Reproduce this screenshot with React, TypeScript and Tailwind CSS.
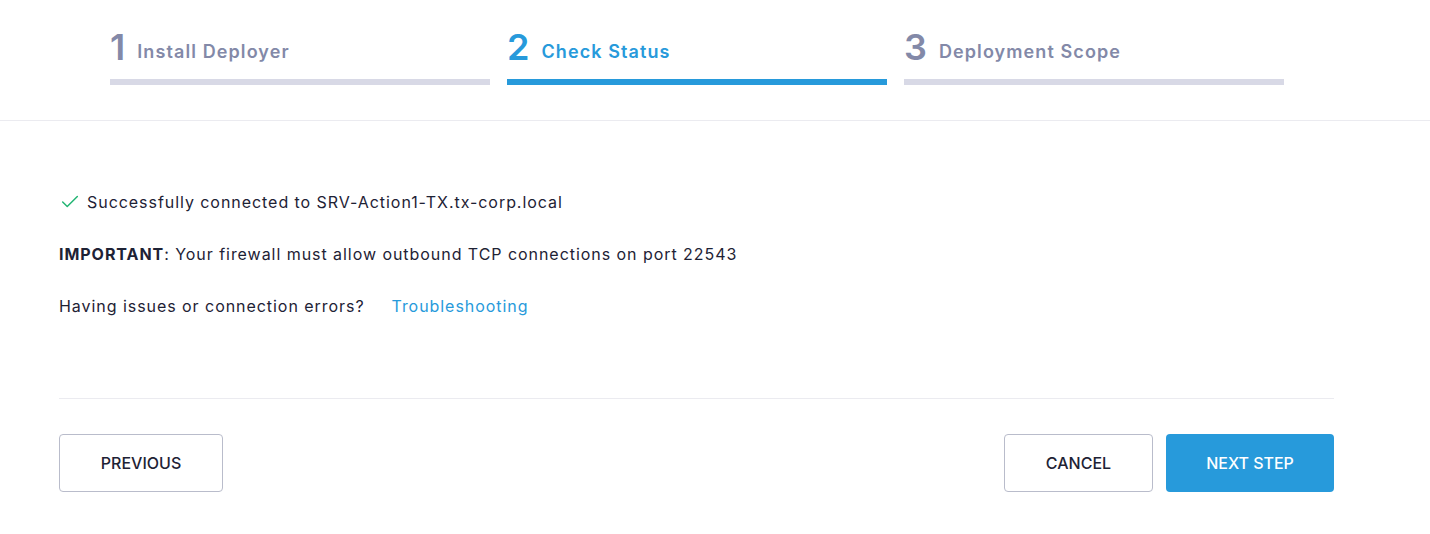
import { Check } from "lucide-react";

const steps = [
  { n: "1", title: "Install Deployer", active: false },
  { n: "2", title: "Check Status", active: true },
  { n: "3", title: "Deployment Scope", active: false },
];

export default function App() {
  return (
    <div className="min-h-[534px] bg-white text-[#1e2235]" style={{ fontFamily: "Inter, 'Noto Sans', sans-serif" }}>
      <div className="border-b border-[#ebebf0] pt-[22px] h-[121px]">
        <div className="ml-[110px] w-[1174px] grid grid-cols-3 gap-[17px]">
          {steps.map((s) => (
            <div key={s.n}>
              <div className={`flex items-baseline gap-[12px] h-[57px] ${s.active ? "text-[#279adb]" : "text-[#8389a8]"}`}>
                <span className="text-[36px] font-semibold leading-[50px]">{s.n}</span>
                <span className="text-[18px] font-semibold tracking-[1.1px] relative -top-[2px]">{s.title}</span>
              </div>
              <div className={`h-[6px] ${s.active ? "bg-[#279adb]" : "bg-[#d8d9e6]"}`} />
            </div>
          ))}
        </div>
      </div>

      <div className="mx-[59px] w-[1275px]">
        <div className="pt-[69px] pb-[80px] text-[16px] tracking-[0.95px] flex flex-col gap-[28px]">
          <div className="flex items-center gap-[6px] h-[24px]">
            <Check className="w-[22px] h-[22px] text-[#22b573]" strokeWidth={1.6} />
            <span>Successfully connected to SRV-Action1-TX.tx-corp.local</span>
          </div>
          <div className="h-[24px] flex items-center">
            <span><b className="font-bold">IMPORTANT</b>: Your firewall must allow outbound TCP connections on port 22543</span>
          </div>
          <div className="h-[24px] flex items-center gap-[27px]">
            <span>Having issues or connection errors?</span>
            <a className="text-[#279adb]" href="#">Troubleshooting</a>
          </div>
        </div>

        <div className="border-t border-[#ebebf0] pt-[35px] flex items-center">
          <button className="w-[164px] h-[58px] border border-[#b9bccb] rounded-[4px] text-[16px] font-medium">PREVIOUS</button>
          <div className="ml-auto flex gap-[13px]">
            <button className="w-[149px] h-[58px] border border-[#b9bccb] rounded-[4px] text-[16px] font-medium">CANCEL</button>
            <button className="w-[168px] h-[58px] rounded-[4px] bg-[#279adb] text-white text-[16px] font-medium">NEXT STEP</button>
          </div>
        </div>
      </div>
    </div>
  );
}
